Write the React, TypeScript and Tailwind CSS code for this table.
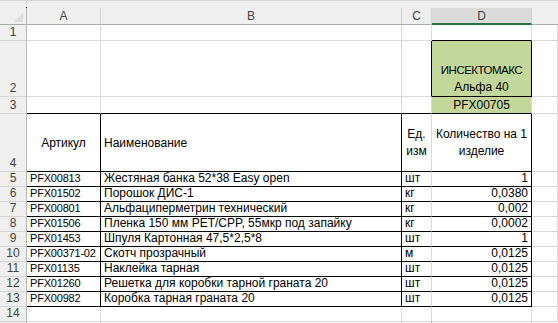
import type { ReactNode } from 'react'

type Item = { code: string; name: string; unit: string; qty: string }

const items: Item[] = [
  { code: 'PFX00813', name: 'Жестяная банка 52*38 Easy open', unit: 'шт', qty: '1' },
  { code: 'PFX01502', name: 'Порошок ДИС-1', unit: 'кг', qty: '0,0380' },
  { code: 'PFX00801', name: 'Альфациперметрин технический', unit: 'кг', qty: '0,002' },
  { code: 'PFX01506', name: 'Пленка 150 мм PET/CPP, 55мкр под запайку', unit: 'кг', qty: '0,0002' },
  { code: 'PFX01453', name: 'Шпуля Картонная 47,5*2,5*8', unit: 'шт', qty: '1' },
  { code: 'PFX00371-02', name: 'Скотч прозрачный', unit: 'м', qty: '0,0125' },
  { code: 'PFX01135', name: 'Наклейка тарная', unit: 'шт', qty: '0,0125' },
  { code: 'PFX01260', name: 'Решетка для коробки тарной граната 20', unit: 'шт', qty: '0,0125' },
  { code: 'PFX00982', name: 'Коробка тарная граната 20', unit: 'шт', qty: '0,0125' },
]

// plain worksheet cell: gridline on the right and bottom, overridden per cell
function Cell({ className = '', children }: { className?: string; children?: ReactNode }) {
  return (
    <div className={`flex min-w-0 overflow-visible whitespace-nowrap border-r border-b border-r-[#d9d9d9] border-b-[#d9d9d9] ${className}`}>
      {children}
    </div>
  )
}

function RowHead({ n }: { n: number }) {
  return (
    <div className="flex items-end justify-center border-r border-b border-r-[#b8b8b8] border-b-[#d4d4d4] bg-[#efefef] text-[#444] leading-[15px]">
      {n}
    </div>
  )
}

function ColHead({ label, active = false }: { label: string; active?: boolean }) {
  return (
    <div
      className={`flex items-center justify-center border-r border-r-[#d0d0d0] text-[#444] ${
        active ? 'bg-[#dadada] border-b-2 border-b-[#217346]' : 'bg-[#efefef] border-b border-b-[#ababab]'
      }`}
    >
      {label}
    </div>
  )
}

export default function App() {
  return (
    <div className="w-[558px] h-[323px] overflow-hidden bg-white text-[12px] text-black font-['Liberation_Sans',Arial,sans-serif]">
      {/* strip above the column headers */}
      <div className="h-[8px] bg-[#efefef] border-t border-[#d6d6d6] flex">
        <div className="ml-[26px] mt-[6px] w-px h-px bg-black" />
      </div>

      <div className="grid grid-cols-[27px_74px_301px_30px_100px_1fr] grid-rows-[17px_16px_56px_17px_58px_repeat(10,15px)_1fr] h-[315px]">
        {/* header row */}
        <div className="relative border-r border-b border-r-[#b8b8b8] border-b-[#ababab] bg-[#efefef]">
          <svg className="absolute right-[3px] bottom-[2px]" width="9" height="9" viewBox="0 0 9 9">
            <path d="M9 0V9H0Z" fill="#dcdcdc" />
          </svg>
        </div>
        <ColHead label="A" />
        <ColHead label="B" />
        <ColHead label="C" />
        <ColHead label="D" active />
        <div className="bg-[#efefef] border-b border-b-[#ababab]" />

        {/* row 1 */}
        <RowHead n={1} />
        <Cell />
        <Cell />
        <Cell />
        <Cell className="border-b-black" />
        <Cell />

        {/* row 2 */}
        <RowHead n={2} />
        <Cell />
        <Cell />
        <Cell className="border-r-black" />
        <Cell className="bg-[#c4d79b] border-r-black border-b-black flex-col items-center justify-end leading-[17px]">
          <span className="text-[11.5px] tracking-[-0.5px]">ИНСЕКТОМАКС</span>
          <span>Альфа 40</span>
        </Cell>
        <Cell />

        {/* row 3 */}
        <RowHead n={3} />
        <Cell className="border-b-black" />
        <Cell className="border-b-black" />
        <Cell className="border-b-black" />
        <Cell className="bg-[#c4d79b] border-b-black items-center justify-center">PFX00705</Cell>
        <Cell />

        {/* row 4: table header */}
        <RowHead n={4} />
        <Cell className="border-r-black border-b-black items-center justify-center">Артикул</Cell>
        <Cell className="border-r-black border-b-black items-center pl-[3px]">Наименование</Cell>
        <Cell className="border-r-[#8f8f8f] border-b-black flex-col items-center justify-center leading-[17px]">
          <span>Ед.</span>
          <span>изм</span>
        </Cell>
        <Cell className="border-r-black border-b-black flex-col items-center justify-center leading-[17px]">
          <span>Количество на 1</span>
          <span>изделие</span>
        </Cell>
        <Cell />

        {items.map((it, i) => (
          <div key={it.code} className="contents">
            <RowHead n={i + 5} />
            <Cell className="border-r-black border-b-black items-end pl-[3px] leading-[15px] text-[11px] tracking-[-0.2px]">{it.code}</Cell>
            <Cell className="border-r-black border-b-black items-end pl-[3px] leading-[15px]">{it.name}</Cell>
            <Cell className="border-r-[#8f8f8f] border-b-black items-end pl-[3px] leading-[15px]">{it.unit}</Cell>
            <Cell className="border-r-black border-b-black items-end justify-end pr-[3px] leading-[15px]">{it.qty}</Cell>
            <Cell />
          </div>
        ))}

        {/* row 14 */}
        <RowHead n={14} />
        <Cell />
        <Cell />
        <Cell className="border-r-[#8f8f8f]" />
        <Cell />
        <Cell />

        {/* partly visible row below */}
        <div className="bg-[#efefef] border-r border-r-[#b8b8b8]" />
        <div className="border-r border-r-[#d9d9d9]" />
        <div className="border-r border-r-[#d9d9d9]" />
        <div className="border-r border-r-[#8f8f8f]" />
        <div className="border-r border-r-[#d9d9d9]" />
        <div />
      </div>
    </div>
  )
}
